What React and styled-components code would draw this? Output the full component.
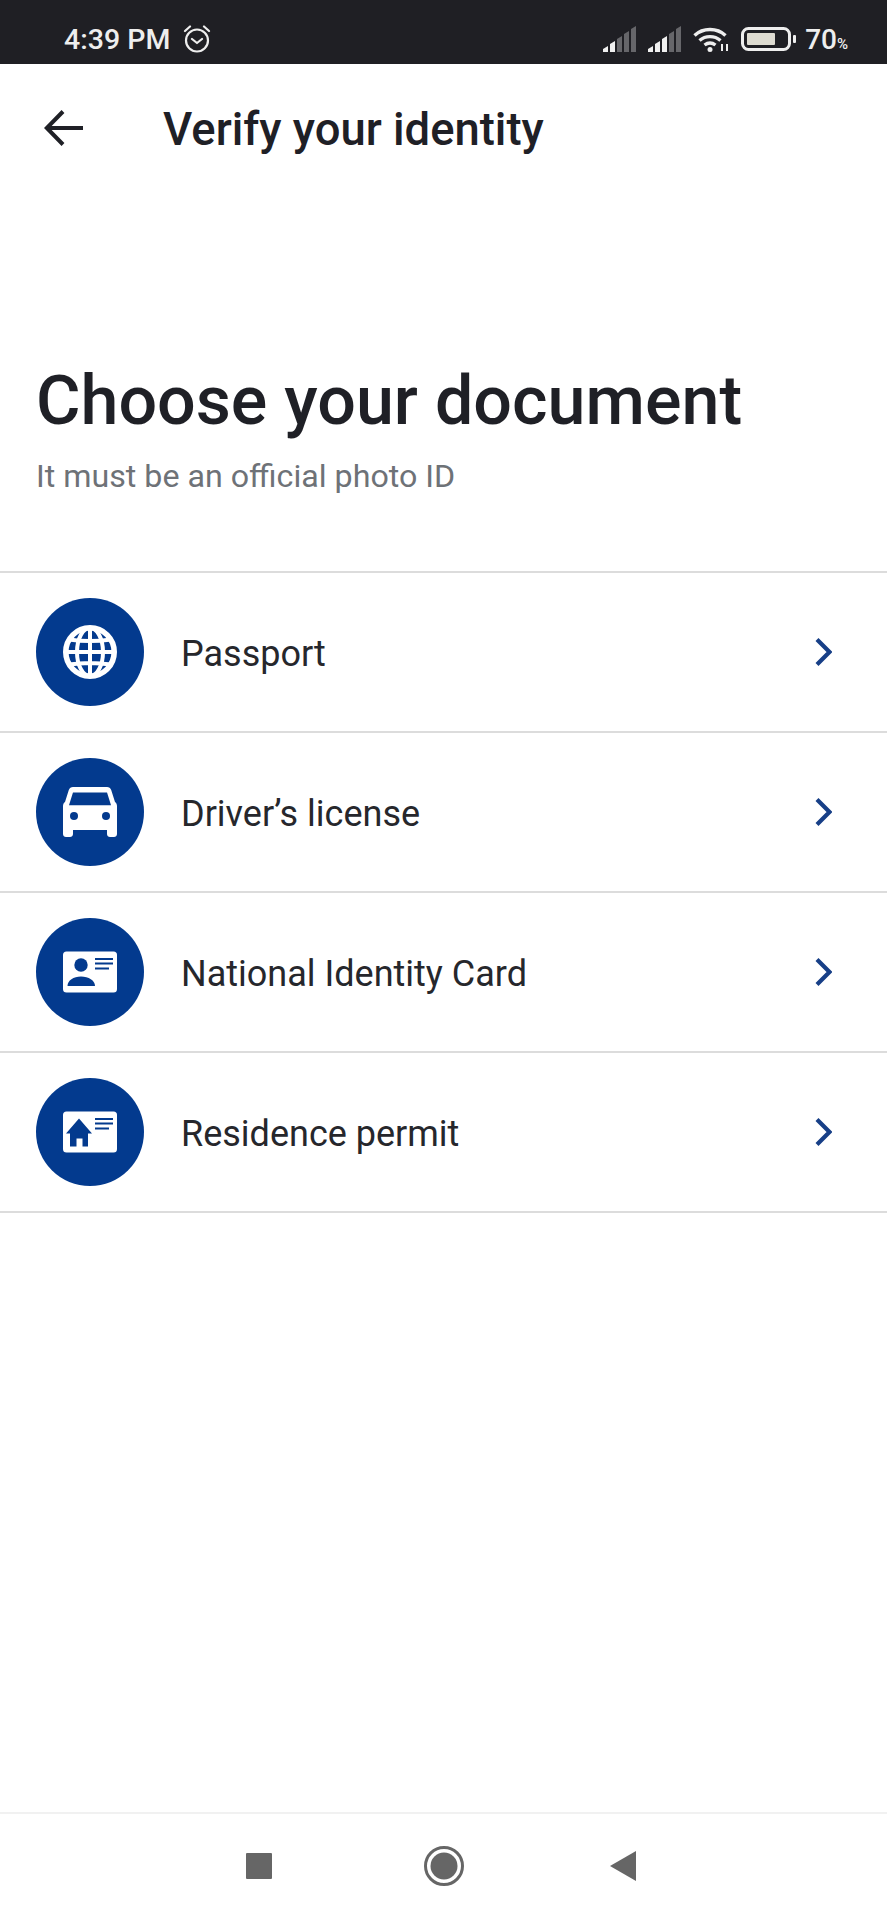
import React from 'react'
import styled, { createGlobalStyle } from 'styled-components'

const GlobalStyle = createGlobalStyle`
  html, body {
    margin: 0;
    padding: 0;
    background: #fff;
  }
  * {
    box-sizing: border-box;
  }
`

const Screen = styled.div`
  width: 887px;
  height: 1920px;
  display: flex;
  flex-direction: column;
  font-family: Roboto, "Liberation Sans", sans-serif;
  color: #1f2026;
  background: #fff;
  overflow: hidden;
`

const StatusBar = styled.div`
  height: 64px;
  flex: none;
  display: flex;
  align-items: center;
  padding: 14px 39px 0 64px;
  background: #1f1f24;
  color: #eeeeee;
`

const Time = styled.span`
  font-size: 28.5px;
  font-weight: 500;
  margin-right: 12px;
`

const StatusRight = styled.div`
  margin-left: auto;
  display: flex;
  align-items: center;
  gap: 11px;
`

const Percent = styled.span`
  font-size: 28px;
  font-weight: 500;
  margin-left: -3px;
  small {
    font-size: 15px;
  }
`

const TopBar = styled.header`
  height: 128px;
  flex: none;
  display: flex;
  align-items: center;
  padding-left: 44px;
`

const BackButton = styled.button`
  width: 39px;
  height: 36px;
  padding: 0;
  border: 0;
  background: none;
  margin-right: 80px;
  display: flex;
`

const BarTitle = styled.h1`
  margin: 2px 0 0;
  font-size: 45.4px;
  font-weight: 500;
`

const Intro = styled.section`
  padding: 170px 36px 0;
  height: 379px;
  flex: none;
`

const Heading = styled.h2`
  margin: 0;
  font-size: 68.2px;
  line-height: 78px;
  font-weight: 500;
`

const Hint = styled.p`
  margin: 16px 0 0;
  font-size: 32.2px;
  line-height: 40px;
  color: #6e7277;
`

const List = styled.ul`
  margin: 0;
  padding: 0;
  list-style: none;
  border-top: 2px solid #dcdcdc;
`

const Row = styled.li`
  height: 160px;
  display: flex;
  align-items: center;
  padding: 0 55px 0 36px;
  border-bottom: 2px solid #dcdcdc;
`

const Badge = styled.div`
  width: 108px;
  height: 108px;
  flex: none;
  border-radius: 50%;
  background: #033a8e;
  display: flex;
  align-items: center;
  justify-content: center;
  margin-right: 37px;
`

const Label = styled.span`
  font-size: 36px;
  flex: 1;
  padding-top: 3px;
  color: #26272c;
`

const NavBar = styled.nav`
  margin-top: auto;
  height: 108px;
  flex: none;
  border-top: 2px solid #f1f1f1;
  display: flex;
  align-items: center;
  justify-content: center;
  gap: 152px;
  padding: 0 6px 3px 0;
`

const NavBack = styled.svg`
  margin-left: -6px;
`

const ICON_BLUE = '#033a8e'

function SignalIcon({ active }) {
  const heights = [6, 11, 16, 21, 26]
  return (
    <svg width="34" height="26" viewBox="0 0 34 26">
      {heights.map((h, i) => (
        <path
          key={i}
          d={`M${i * 7} 26v-${h - 3}l5-3v${h}z`}
          fill={i < active ? '#f0f0f0' : '#66666a'}
        />
      ))}
    </svg>
  )
}

function AlarmIcon() {
  return (
    <svg width="30" height="28" viewBox="0 0 30 28" fill="none" stroke="#eee" strokeWidth="2.2">
      <circle cx="15" cy="15.500" r="11" />
      <path d="M10 14l5 4 5-4M3 6l5-4.500M27 6l-5-4.500" strokeLinecap="round" strokeLinejoin="round" />
    </svg>
  )
}

function WifiIcon() {
  return (
    <svg width="37" height="25" viewBox="0 0 37 25" fill="none" stroke="#eee" strokeWidth="3.400">
      <path d="M1.500 8.500C10 .5 24 .5 32.500 8.500" />
      <path d="M6.500 13.500c6-5.200 15-5.200 21 0" />
      <path d="M11.500 18c3.500-2.600 7.500-2.600 11 0" />
      <circle cx="17" cy="22.500" r="2.500" fill="#eee" stroke="none" />
      <path d="M29 17v7M34 17v7" strokeWidth="2" />
    </svg>
  )
}

function BatteryIcon() {
  return (
    <svg width="56" height="24" viewBox="0 0 56 24">
      <rect x="1.500" y="1.500" width="47" height="21" rx="6" fill="none" stroke="#eee" strokeWidth="3" />
      <rect x="6" y="6" width="28" height="12" rx="1" fill="#dedcd2" />
      <rect x="52" y="8" width="3" height="8" rx="1" fill="#eee" />
    </svg>
  )
}

function BackIcon() {
  return (
    <svg width="39" height="36" viewBox="0 0 39 36" fill="none" stroke="#1f2026" strokeWidth="4">
      <path d="M39 18H3M19 1.500L2.800 18 19 34.500" />
    </svg>
  )
}

function GlobeIcon() {
  return (
    <svg width="54" height="54" viewBox="0 0 54 54" fill="none" stroke="#fff">
      <circle cx="27" cy="27" r="24.200" strokeWidth="5.600" />
      <g strokeWidth="4">
        <path d="M27 3v48M3 27h48M6 14.500c13 2 29 2 42 0M6 39.500c13-2 29-2 42 0" />
        <ellipse cx="27" cy="27" rx="13" ry="24" />
      </g>
    </svg>
  )
}

function CarIcon() {
  return (
    <svg width="54" height="54" viewBox="0 0 54 54">
      <path
        fill="#fff"
        d="M10 2h34c2 0 3.500 1 4.200 3L52 17c1.400 1 2 2.500 2 4v28c0 2-1.400 3-3 3h-4c-1.600 0-3-1.200-3-3v-4H10v4c0 1.800-1.400 3-3 3H3c-1.600 0-3-1-3-3V21c0-1.500.6-3 2-4L5.800 5C6.500 3 8 2 10 2z"
      />
      <path fill={ICON_BLUE} d="M10 7.500h34l4 12.800H6z" />
      <circle cx="11" cy="31" r="4" fill={ICON_BLUE} />
      <circle cx="43" cy="31" r="4" fill={ICON_BLUE} />
    </svg>
  )
}

function CardLines() {
  return <path d="M32 14h18M32 18.500h18M32 23.500h14" stroke={ICON_BLUE} strokeWidth="2" />
}

function IdCardIcon() {
  return (
    <svg width="54" height="54" viewBox="0 0 54 54">
      <rect y="6.500" width="54" height="41" rx="3.500" fill="#fff" />
      <CardLines />
      <circle cx="18" cy="20" r="6.700" fill={ICON_BLUE} />
      <path d="M4.500 41c0-5.500 6-9.500 13.500-9.500S32 35.500 32 41z" fill={ICON_BLUE} />
    </svg>
  )
}

function ResidenceIcon() {
  return (
    <svg width="54" height="54" viewBox="0 0 54 54">
      <rect y="6.500" width="54" height="41" rx="3.500" fill="#fff" />
      <CardLines />
      <path
        fill={ICON_BLUE}
        d="M16 13.500L29 28.500H25V41.500H19.500V33.500H13.500V41.500H7V28.500H3z"
      />
    </svg>
  )
}

function ChevronIcon() {
  return (
    <svg width="17" height="28" viewBox="0 0 17 28" fill="none" stroke="#173f87" strokeWidth="4.200">
      <path d="M2 1.500L14.500 14 2 26.500" />
    </svg>
  )
}

const documents = [
  { label: 'Passport', Icon: GlobeIcon },
  { label: 'Driver’s license', Icon: CarIcon },
  { label: 'National Identity Card', Icon: IdCardIcon },
  { label: 'Residence permit', Icon: ResidenceIcon },
]

export default function App() {
  return (
    <Screen>
      <GlobalStyle />
      <StatusBar>
        <Time>4:39 PM</Time>
        <AlarmIcon />
        <StatusRight>
          <SignalIcon active={2} />
          <SignalIcon active={3} />
          <WifiIcon />
          <BatteryIcon />
          <Percent>70<small>%</small></Percent>
        </StatusRight>
      </StatusBar>

      <TopBar>
        <BackButton aria-label="Back"><BackIcon /></BackButton>
        <BarTitle>Verify your identity</BarTitle>
      </TopBar>

      <Intro>
        <Heading>Choose your document</Heading>
        <Hint>It must be an official photo ID</Hint>
      </Intro>

      <List>
        {documents.map(({ label, Icon }) => (
          <Row key={label}>
            <Badge><Icon /></Badge>
            <Label>{label}</Label>
            <ChevronIcon />
          </Row>
        ))}
      </List>

      <NavBar>
        <svg width="26" height="26" viewBox="0 0 26 26"><rect width="26" height="26" rx="1" fill="#666" /></svg>
        <svg width="40" height="40" viewBox="0 0 40 40">
          <circle cx="20" cy="20" r="18.500" fill="none" stroke="#666" strokeWidth="3" />
          <circle cx="20" cy="20" r="13.500" fill="#666" />
        </svg>
        <NavBack width="26" height="30" viewBox="0 0 26 30"><path d="M0 15L26 0v30z" fill="#666" /></NavBack>
      </NavBar>
    </Screen>
  )
}
